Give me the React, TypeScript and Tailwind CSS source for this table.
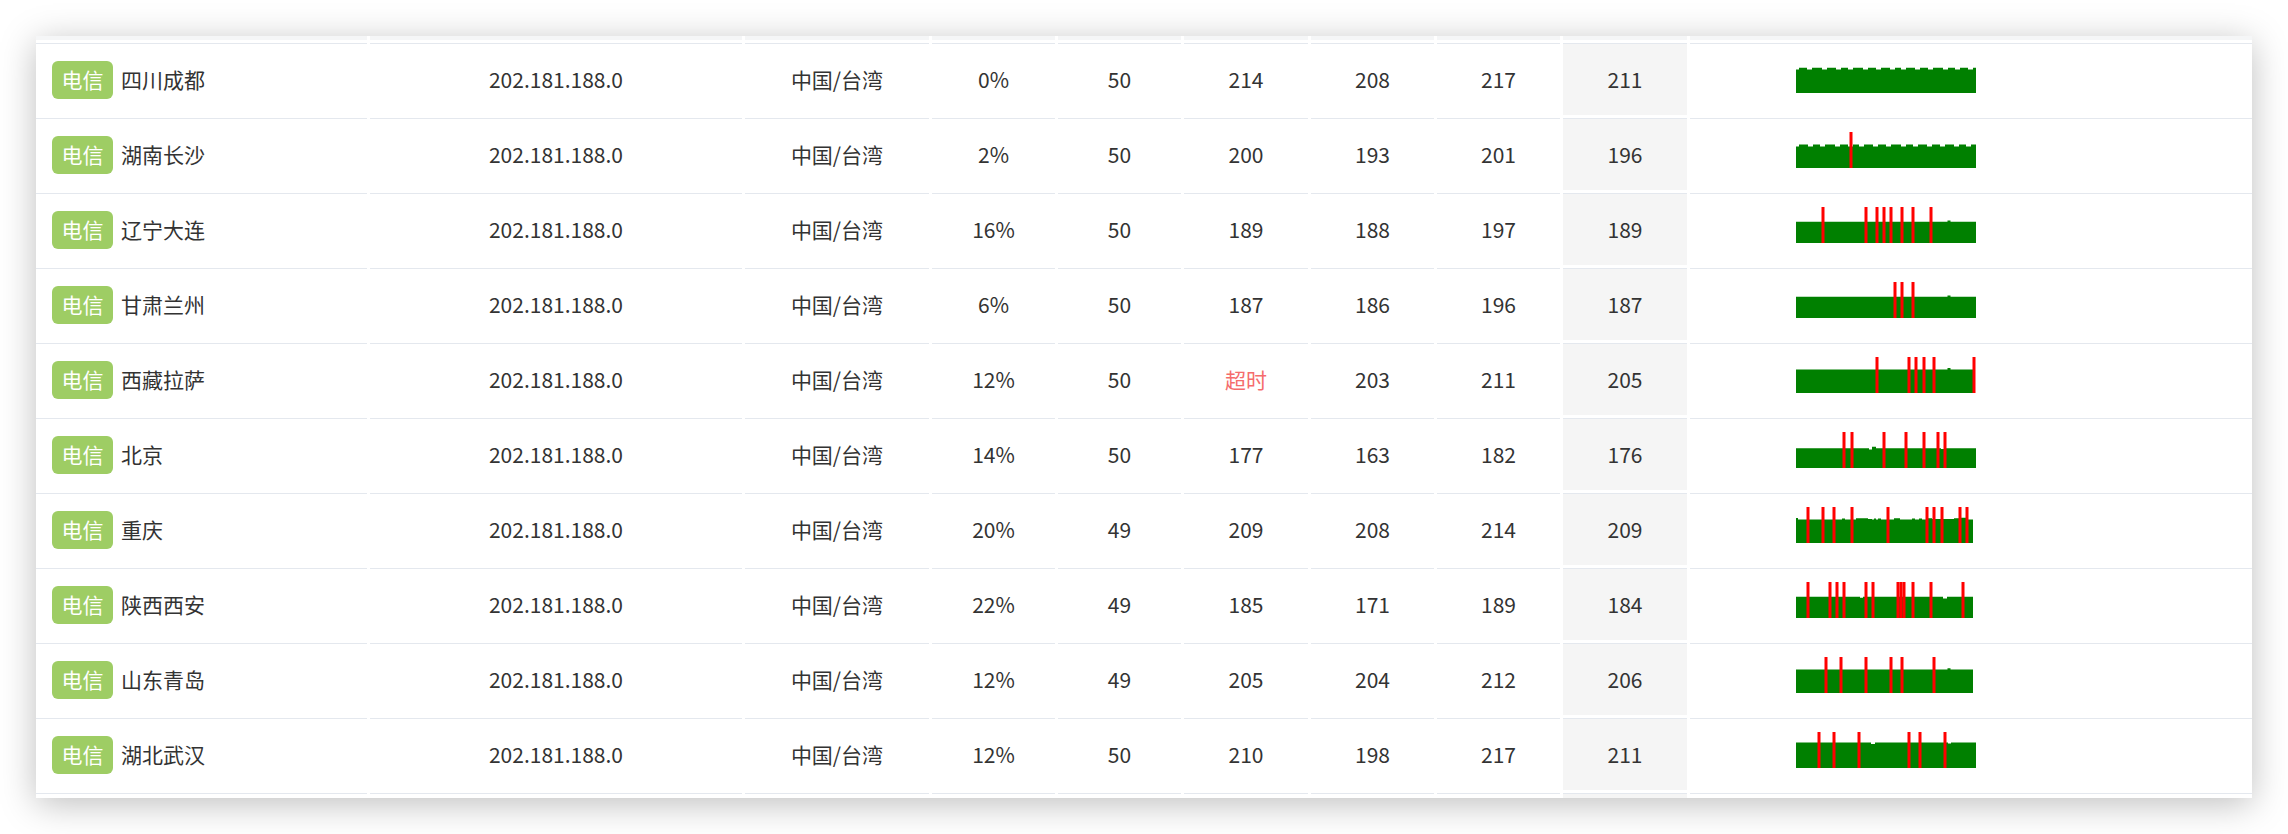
import React from "react";

type Seg = [number, number]; // [x start, height]

type Row = {
  city: string;
  ip: string;
  loc: string;
  loss: string;
  sent: string;
  last: string;
  best: string;
  worst: string;
  avg: string;
  spikes: number[];
  segs: Seg[];
  w: number;
};

function notchy(high: number, low: number, w: number, pattern: number[]): Seg[] {
  const out: Seg[] = [];
  let x = 0;
  let i = 0;
  out.push([0, low]);
  x = 3;
  while (x < w) {
    const hi = pattern[i % pattern.length];
    out.push([x, high]);
    x += hi;
    if (x >= w) break;
    out.push([x, low]);
    x += 5;
    i++;
  }
  return out;
}

const rows: Row[] = [
  {
    city: "四川成都", ip: "202.181.188.0", loc: "中国/台湾", loss: "0%", sent: "50",
    last: "214", best: "208", worst: "217", avg: "211", spikes: [],
    segs: notchy(25.3, 23.4, 180, [8, 10, 9, 7, 10, 8, 9, 6, 9, 8, 10, 7]), w: 180,
  },
  {
    city: "湖南长沙", ip: "202.181.188.0", loc: "中国/台湾", loss: "2%", sent: "50",
    last: "200", best: "193", worst: "201", avg: "196", spikes: [55],
    segs: notchy(23.4, 21.6, 180, [9, 7, 10, 8, 6, 9, 8, 10, 7, 9, 8]), w: 180,
  },
  {
    city: "辽宁大连", ip: "202.181.188.0", loc: "中国/台湾", loss: "16%", sent: "50",
    last: "189", best: "188", worst: "197", avg: "189",
    spikes: [27, 70, 81, 88, 95, 106, 117, 135],
    segs: [[0, 21.2], [151.5, 22.6], [154.5, 21.2]], w: 180,
  },
  {
    city: "甘肃兰州", ip: "202.181.188.0", loc: "中国/台湾", loss: "6%", sent: "50",
    last: "187", best: "186", worst: "196", avg: "187",
    spikes: [99, 106, 117],
    segs: [[0, 21.2], [151.5, 22.6], [154.5, 21.2]], w: 180,
  },
  {
    city: "西藏拉萨", ip: "202.181.188.0", loc: "中国/台湾", loss: "12%", sent: "50",
    last: "超时", best: "203", worst: "211", avg: "205",
    spikes: [81, 113, 120, 128, 138, 178],
    segs: [[0, 23.6], [151.5, 25], [154.5, 23.6]], w: 177,
  },
  {
    city: "北京", ip: "202.181.188.0", loc: "中国/台湾", loss: "14%", sent: "50",
    last: "177", best: "163", worst: "182", avg: "176",
    spikes: [48, 56, 88, 110, 128, 142, 149],
    segs: [[0, 19.8], [73, 18.6], [76, 21.2], [80, 19.8], [145, 19], [150, 19.8]], w: 180,
  },
  {
    city: "重庆", ip: "202.181.188.0", loc: "中国/台湾", loss: "20%", sent: "49",
    last: "209", best: "208", worst: "214", avg: "209",
    spikes: [12, 27, 38, 56, 92, 131, 138, 146, 164, 171],
    segs: [
      [0, 25], [2, 23.4], [46, 24.6], [49, 23.4], [60, 24.8], [72, 24], [76, 23.4],
      [78, 24.6], [80, 23.4], [82, 24.6], [85, 23.4], [98, 24.8], [104, 23.4],
      [116, 24.6], [119, 23.4], [123, 24.6], [126, 23.4], [132, 24.8], [136, 24],
      [158, 24.8], [165, 25.2], [170, 24], [172, 23.4],
    ],
    w: 177,
  },
  {
    city: "陕西西安", ip: "202.181.188.0", loc: "中国/台湾", loss: "22%", sent: "49",
    last: "185", best: "171", worst: "189", avg: "184",
    spikes: [12, 34, 41, 48, 70, 77, 102, 105, 108, 117, 135, 167],
    segs: [[0, 21.2], [64, 20.2], [67, 21.2], [147, 19.6], [151, 21.2]], w: 177,
  },
  {
    city: "山东青岛", ip: "202.181.188.0", loc: "中国/台湾", loss: "12%", sent: "49",
    last: "205", best: "204", worst: "212", avg: "206",
    spikes: [30, 45, 70, 95, 106, 138],
    segs: [[0, 23.4], [151.5, 24.8], [154.5, 23.4]], w: 177,
  },
  {
    city: "湖北武汉", ip: "202.181.188.0", loc: "中国/台湾", loss: "12%", sent: "50",
    last: "210", best: "198", worst: "217", avg: "211",
    spikes: [23, 38, 63, 113, 124, 149],
    segs: [[0, 25.4], [75, 24], [79, 25.4], [152, 24.4], [155, 25.4]], w: 180,
  },
];

function Chart({ segs, spikes, w }: { segs: Seg[]; spikes: number[]; w: number }) {
  const H = 36;
  let d = `M0 ${H}`;
  segs.forEach(([x, h], i) => {
    const x1 = i + 1 < segs.length ? segs[i + 1][0] : w;
    d += ` L${x} ${H - h} L${x1} ${H - h}`;
  });
  d += ` L${w} ${H} Z`;
  return (
    <svg width={180} height={H} viewBox={`0 0 180 ${H}`} className="block">
      <path d={d} fill="#008000" />
      {spikes.map((x, i) => (
        <rect key={i} x={x - 1.5} y={0} width={3} height={H} fill="#ff0000" />
      ))}
    </svg>
  );
}

const GRID =
  "grid grid-cols-[331px_372px_184px_123px_123px_124px_123px_123px_124px_562px] gap-x-[3px]";

const cell = "border-t border-[#e4e8ee] flex items-center justify-center";

export default function App() {
  return (
    <div className="min-h-[834px] w-[2288px] bg-white p-[36px] font-['Noto_Sans_CJK_SC','Noto_Sans',sans-serif] text-[21px] text-[#333]">
      <div className="flex h-[762px] flex-col gap-y-[3px] overflow-hidden bg-white shadow-[0_6px_34px_rgba(0,0,0,0.26)]">
        {/* header remnant */}
        <div className={`${GRID} h-[4px] shrink-0`}>
          {Array.from({ length: 10 }).map((_, i) => (
            <div key={i} className="bg-[#f5f6f7]" />
          ))}
        </div>
        {rows.map((r, idx) => (
          <div key={idx} className={`${GRID} h-[72px] shrink-0`}>
            <div className={`${cell} justify-start pl-[16px]`}>
              <span className="flex h-[38px] w-[61px] items-center justify-center rounded-[6px] bg-[#9ecd64] text-white">
                电信
              </span>
              <span className="ml-[8px]">{r.city}</span>
            </div>
            <div className={cell}>{r.ip}</div>
            <div className={cell}>{r.loc}</div>
            <div className={cell}>{r.loss}</div>
            <div className={cell}>{r.sent}</div>
            <div className={`${cell} ${r.last === "超时" ? "text-[#f56c6c]" : ""}`}>{r.last}</div>
            <div className={cell}>{r.best}</div>
            <div className={cell}>{r.worst}</div>
            <div className={`${cell} bg-[#f5f5f5]`}>{r.avg}</div>
            <div className="border-t border-[#e4e8ee] pl-[106px] pt-[13px]">
              <Chart segs={r.segs} spikes={r.spikes} w={r.w} />
            </div>
          </div>
        ))}
        {/* partial next row */}
        <div className={`${GRID} h-[5px] shrink-0`}>
          {Array.from({ length: 10 }).map((_, i) => (
            <div
              key={i}
              className={`border-t border-[#e4e8ee] ${i === 8 ? "bg-[#f5f5f5]" : ""}`}
            />
          ))}
        </div>
      </div>
    </div>
  );
}
